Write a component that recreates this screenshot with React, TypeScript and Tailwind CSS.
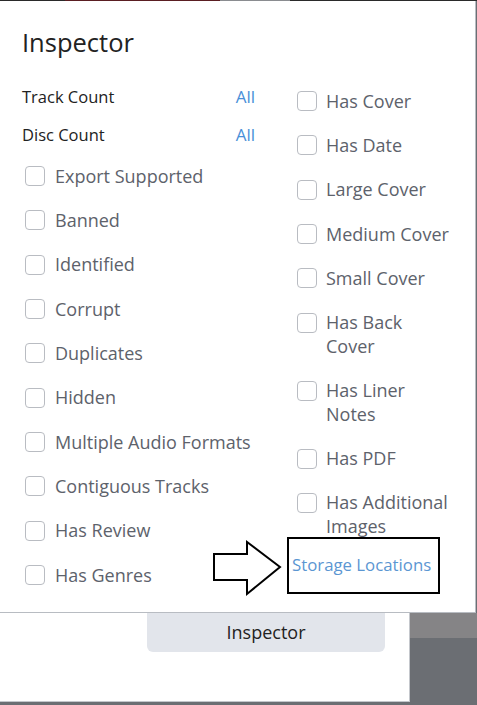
import React from 'react';

const font = { fontFamily: '"Open Sans", "Noto Sans", sans-serif' };

const leftChecks = [
  'Export Supported',
  'Banned',
  'Identified',
  'Corrupt',
  'Duplicates',
  'Hidden',
  'Multiple Audio Formats',
  'Contiguous Tracks',
  'Has Review',
  'Has Genres',
];

// tall = label wraps onto two lines
const rightChecks: { label: string; tall?: boolean }[] = [
  { label: 'Has Cover' },
  { label: 'Has Date' },
  { label: 'Large Cover' },
  { label: 'Medium Cover' },
  { label: 'Small Cover' },
  { label: 'Has Back Cover', tall: true },
  { label: 'Has Liner Notes', tall: true },
  { label: 'Has PDF' },
  { label: 'Has Additional Images', tall: true },
];

const Box: React.FC<{ className?: string }> = ({ className = '' }) => (
  <div className={`block w-[20px] h-[20px] shrink-0 rounded-[4px] border border-[#b9bcc2] bg-white ${className}`} />
);

const CountRow: React.FC<{ label: string }> = ({ label }) => (
  <div className="h-[38px] w-[233px] flex items-center justify-between">
    <span className="text-[16.5px] text-[#222]">{label}</span>
    <span className="text-[17px] text-[#4a8fd8]">All</span>
  </div>
);

const Arrow: React.FC = () => (
  <svg width="70" height="58" viewBox="0 0 70 58" className="absolute left-[-76px] top-[1px]">
    <polygon
      points="1,14 34,14 34,2 67,27 34,54 34,40 1,40"
      fill="white"
      stroke="black"
      strokeWidth="2"
      strokeLinejoin="miter"
    />
  </svg>
);

const App: React.FC = () => {
  return (
    <div className="w-[477px] h-[705px] bg-[#6b6e73] flex flex-col overflow-hidden" style={font}>
      <div className="h-[1px] flex">
        <div className="w-[65px] bg-[#2a2a2a]" />
        <div className="w-[155px] bg-[#5a1e22]" />
        <div className="w-[70px] bg-[#8a8c90]" />
        <div className="flex-1 bg-[#2a2a2a]" />
      </div>

      <div className="w-[476px] h-[612px] bg-white border-r border-b border-[#b8bcc2] pl-[22px] flex flex-col">
        <div className="h-[77px] pt-[23px]">
          <h1 className="text-[25.5px] leading-[36px] text-[#222]">Inspector</h1>
        </div>
        <div className="flex">
          <div className="w-[275px] flex flex-col">
            <CountRow label="Track Count" />
            <CountRow label="Disc Count" />
            {leftChecks.map((l) => (
              <div key={l} className="h-[44.33px] flex items-center gap-[10px] pl-[3px]">
                <Box />
                <span className="text-[18px] text-[#5d626b]">{l}</span>
              </div>
            ))}
          </div>
          <div className="flex flex-col pt-[1px]">
            {rightChecks.map(({ label, tall }) =>
              tall ? (
                <div key={label} className="h-[68px] flex items-start gap-[9px] pt-[9px]">
                  <Box className="mt-[3px]" />
                  <span className="w-[124px] text-[18px] leading-[24.5px] text-[#5d626b]">{label}</span>
                </div>
              ) : (
                <div key={label} className="h-[44.33px] flex items-center gap-[9px]">
                  <Box />
                  <span className="text-[18px] text-[#5d626b]">{label}</span>
                </div>
              )
            )}
            <div className="relative ml-[-10px] mt-[-12px] w-[153px] h-[57px] border-2 border-black flex items-center pl-[3px] pb-[2px]">
              <Arrow />
              <span className="text-[16.8px] text-[#5b96d2] whitespace-nowrap">Storage Locations</span>
            </div>
          </div>
        </div>
      </div>

      <div className="flex flex-1">
        <div className="w-[410px] h-[89px] bg-white border-r border-b border-[#c4c7cc] flex justify-start">
          <div className="ml-[147px] w-[238px] h-[39px] bg-[#e2e5eb] rounded-b-md flex items-center justify-center text-[18px] text-[#222]">
            Inspector
          </div>
        </div>
        <div className="flex-1 flex flex-col">
          <div className="h-[25px] bg-[#858486]" />
          <div className="flex-1 bg-[#6b6e73]" />
        </div>
      </div>
    </div>
  );
};

export default App;
